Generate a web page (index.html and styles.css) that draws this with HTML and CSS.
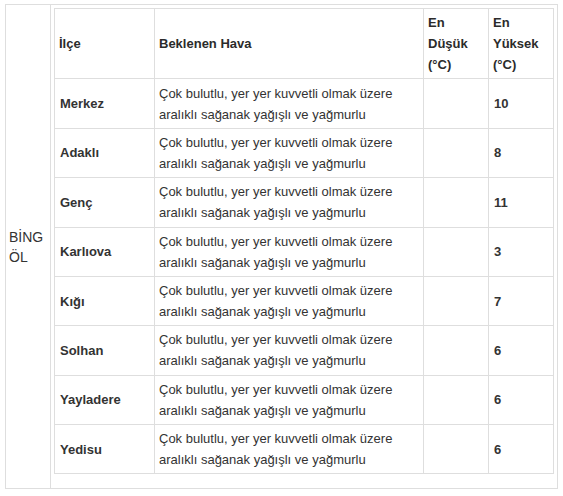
FILE: index.html
```html
<!DOCTYPE html>
<html lang="tr">
<head>
<meta charset="utf-8">
<title>Bingöl Hava Durumu</title>
<link rel="stylesheet" href="styles.css">
</head>
<body>
<div class="page">
<table class="outer">
  <tr>
    <td class="city">BİNG ÖL</td>
    <td class="holder">
      <table class="forecast">
        <colgroup>
          <col class="c-ilce">
          <col class="c-hava">
          <col class="c-min">
          <col class="c-max">
        </colgroup>
        <tr class="head">
          <td>İlçe</td>
          <td>Beklenen Hava</td>
          <td>En Düşük (°C)</td>
          <td>En Yüksek (°C)</td>
        </tr>
        <tr><td class="name">Merkez</td><td>Çok bulutlu, yer yer kuvvetli olmak üzere aralıklı sağanak yağışlı ve yağmurlu</td><td></td><td class="num">10</td></tr>
        <tr><td class="name">Adaklı</td><td>Çok bulutlu, yer yer kuvvetli olmak üzere aralıklı sağanak yağışlı ve yağmurlu</td><td></td><td class="num">8</td></tr>
        <tr><td class="name">Genç</td><td>Çok bulutlu, yer yer kuvvetli olmak üzere aralıklı sağanak yağışlı ve yağmurlu</td><td></td><td class="num">11</td></tr>
        <tr><td class="name">Karlıova</td><td>Çok bulutlu, yer yer kuvvetli olmak üzere aralıklı sağanak yağışlı ve yağmurlu</td><td></td><td class="num">3</td></tr>
        <tr><td class="name">Kığı</td><td>Çok bulutlu, yer yer kuvvetli olmak üzere aralıklı sağanak yağışlı ve yağmurlu</td><td></td><td class="num">7</td></tr>
        <tr><td class="name">Solhan</td><td>Çok bulutlu, yer yer kuvvetli olmak üzere aralıklı sağanak yağışlı ve yağmurlu</td><td></td><td class="num">6</td></tr>
        <tr><td class="name">Yayladere</td><td>Çok bulutlu, yer yer kuvvetli olmak üzere aralıklı sağanak yağışlı ve yağmurlu</td><td></td><td class="num">6</td></tr>
        <tr><td class="name">Yedisu</td><td>Çok bulutlu, yer yer kuvvetli olmak üzere aralıklı sağanak yağışlı ve yağmurlu</td><td></td><td class="num">6</td></tr>
      </table>
    </td>
  </tr>
</table>
</div>
</body>
</html>
```
FILE: styles.css
```css
html, body {
  margin: 0;
  padding: 0;
  background: #ffffff;
}

.page {
  padding: 4px 0 0 5px;
  font-family: "Liberation Sans", Arial, sans-serif;
  color: #333333;
}

.outer {
  border-collapse: collapse;
  width: 553px;
  table-layout: fixed;
}

.outer > tbody > tr > td {
  border: 1px solid #dedede;
  vertical-align: middle;
}

.city {
  width: 38px;
  padding: 0 3px 0 3px;
  font-size: 14px;
  line-height: 20px;
  color: #333333;
}

.holder {
  padding: 3px 2px 14px 3px;
}

.forecast {
  border-collapse: collapse;
  table-layout: fixed;
  width: 500px;
  font-size: 13px;
  line-height: 21px;
}

.c-ilce { width: 100px; }
.c-hava { width: 269px; }
.c-min { width: 65px; }
.c-max { width: 65px; }

.forecast td {
  border: 1px solid #dedede;
  padding: 3.2px 5px 3.2px 4px;
  vertical-align: middle;
  color: #333333;
}

.forecast td.name,
.forecast td.num {
  padding-left: 5px;
}

.head td,
.name,
.num {
  font-weight: bold;
  color: #2b2b2b;
}
```
